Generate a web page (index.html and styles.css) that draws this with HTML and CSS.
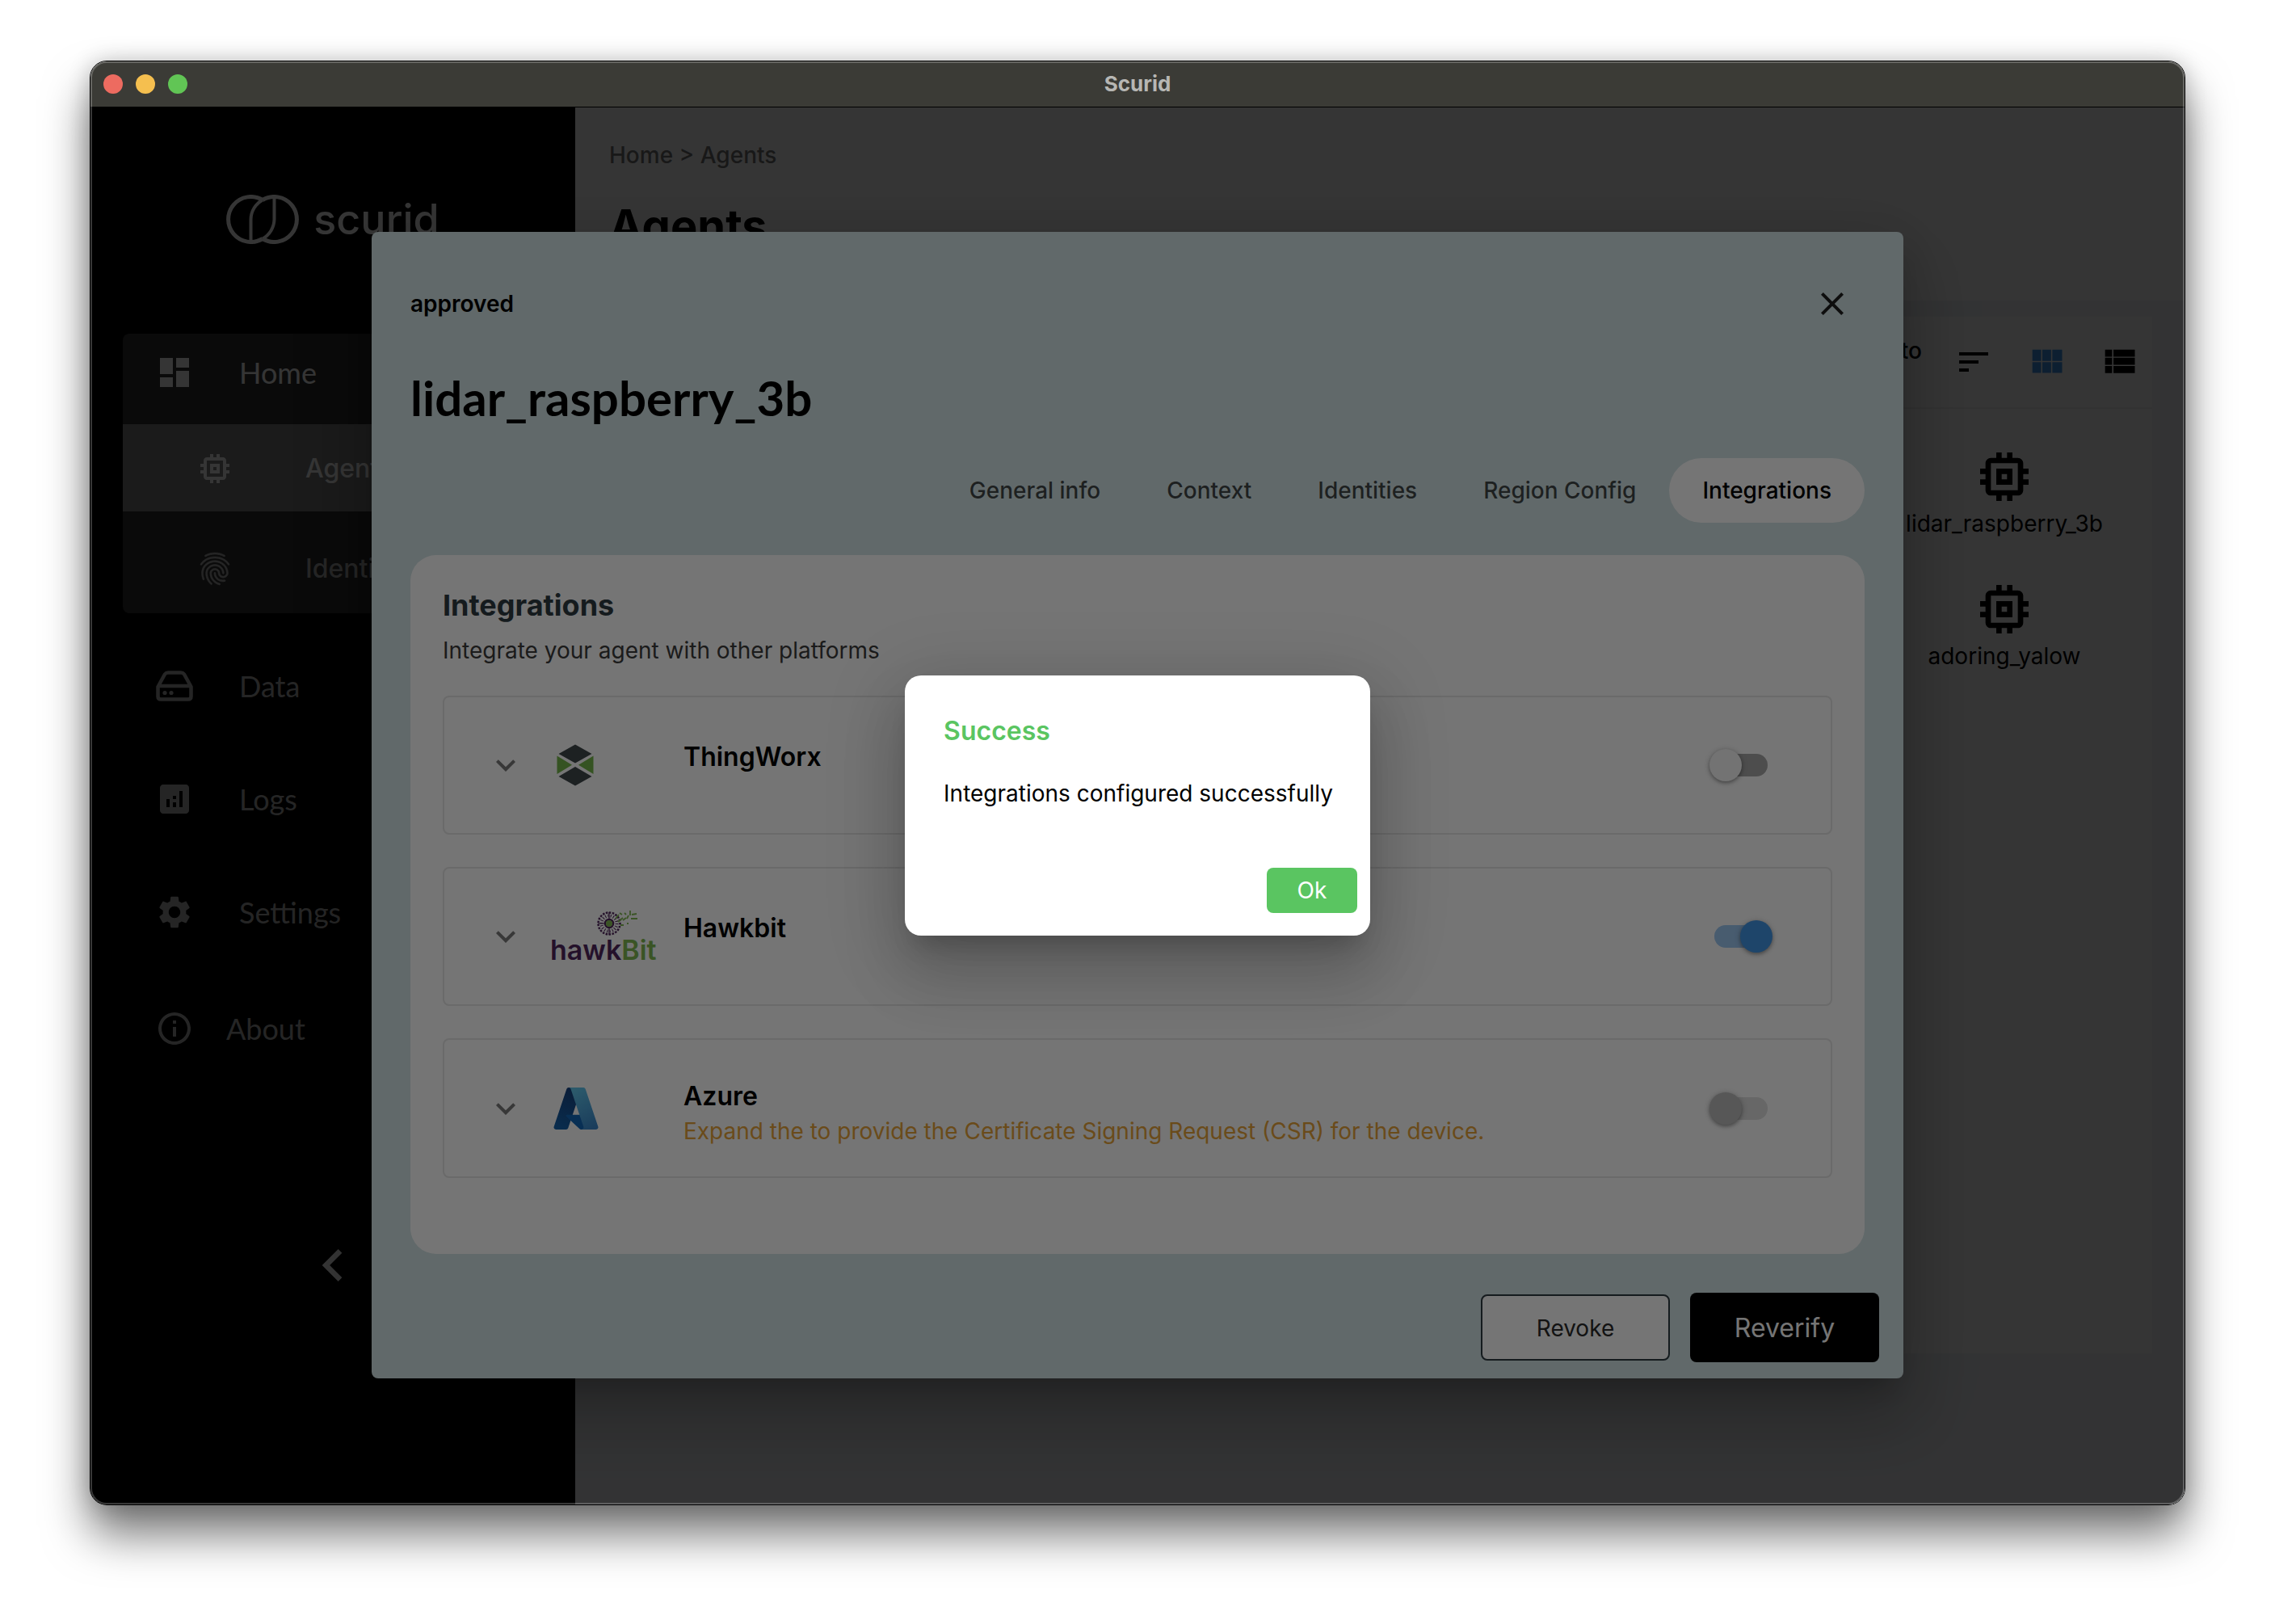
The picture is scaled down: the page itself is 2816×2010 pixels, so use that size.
FILE: index.html
```html
<!DOCTYPE html>
<html lang="en">
<head>
<meta charset="utf-8">
<title>Scurid</title>
<link rel="stylesheet" href="styles.css">
</head>
<body>
<svg class="defs" width="0" height="0" aria-hidden="true">
  <symbol id="i-memory" viewBox="0 0 24 24"><path d="M15 9H9v6h6V9zm-2 4h-2v-2h2v2zm8-2V9h-2V7c0-1.1-.9-2-2-2h-2V3h-2v2h-2V3H9v2H7c-1.1 0-2 .9-2 2v2H3v2h2v2H3v2h2v2c0 1.1.9 2 2 2h2v2h2v-2h2v2h2v-2h2c1.1 0 2-.9 2-2v-2h2v-2h-2v-2h2zm-4 6H7V7h10v10z"/></symbol>
  <symbol id="i-expand" viewBox="0 0 24 24"><path d="M16.59 8.59L12 13.17 7.41 8.59 6 10l6 6 6-6z"/></symbol>
</svg>

<div class="window">
  <header class="titlebar">
    <div class="lights"><i class="light light-close"></i><i class="light light-min"></i><i class="light light-max"></i></div>
    <span class="titlebar-name">Scurid</span>
  </header>

  <div class="app">
    <aside class="sidebar">
      <div class="logo">
        <svg width="90" height="61" viewBox="0 0 90 61">
          <g fill="none" stroke="currentColor" stroke-width="5">
            <path d="M45 6.5A28 28 0 1 0 45 54.5"/>
            <path d="M45 54.5A28 28 0 1 0 45 6.500"/>
            <path stroke-width="4" d="M59.500 3V30.500A28 28 0 0 1 45 54.500"/>
            <path stroke-width="4" d="M30.500 58V30.500A28 28 0 0 1 45 6.500"/>
          </g>
        </svg>
        <span>scurid</span>
      </div>
      <nav>
        <div class="nav-group">
          <a href="#" class="nav-row nav-home">
            <svg width="48" height="48" viewBox="0 0 24 24"><path d="M3 13h8V3H3v10zm0 8h8v-6H3v6zm10 0h8V11h-8v10zm0-18v6h8V3h-8z"/></svg>
            Home
          </a>
          <a href="#" class="nav-sub nav-active">
            <svg width="48" height="48"><use href="#i-memory"/></svg>
            Agents
          </a>
          <a href="#" class="nav-sub nav-identities">
            <svg width="48" height="48" viewBox="0 0 24 24"><path stroke="currentColor" stroke-width=".3" d="M17.81 4.47c-.08 0-.16-.02-.23-.06C15.66 3.42 14 3 12.01 3c-1.98 0-3.86.47-5.57 1.41-.24.13-.54.04-.68-.2-.13-.24-.04-.55.2-.68C7.82 2.52 9.86 2 12.01 2c2.13 0 3.99.47 6.03 1.52.25.13.34.43.21.67-.09.18-.26.28-.44.28zM3.5 9.72c-.1 0-.2-.03-.29-.09-.23-.16-.28-.47-.12-.7.99-1.4 2.25-2.5 3.75-3.27C9.98 4.04 14 4.03 17.15 5.65c1.5.77 2.76 1.86 3.75 3.25.16.22.11.54-.12.7-.23.16-.54.11-.7-.12-.9-1.26-2.04-2.25-3.39-2.94-2.87-1.47-6.54-1.47-9.4.01-1.36.7-2.5 1.7-3.4 2.96-.08.14-.23.21-.39.21zm6.25 12.07c-.13 0-.26-.05-.35-.15-.87-.87-1.34-1.43-2.01-2.64-.69-1.23-1.05-2.73-1.05-4.34 0-2.97 2.54-5.39 5.66-5.39s5.66 2.42 5.66 5.39c0 .28-.22.5-.5.5s-.5-.22-.5-.5c0-2.42-2.09-4.39-4.66-4.39-2.57 0-4.66 1.97-4.66 4.39 0 1.44.32 2.77.93 3.85.64 1.15 1.08 1.64 1.85 2.42.19.2.19.51 0 .71-.11.1-.24.15-.37.15zm7.17-1.85c-1.19 0-2.24-.3-3.1-.89-1.49-1.01-2.38-2.65-2.38-4.39 0-.28.22-.5.5-.5s.5.22.5.5c0 1.41.72 2.74 1.94 3.56.71.48 1.54.71 2.54.71.24 0 .64-.03 1.04-.1.27-.05.53.13.58.41.05.27-.13.53-.41.58-.57.11-1.07.12-1.21.12zM14.91 22c-.04 0-.09-.01-.13-.02-1.59-.44-2.63-1.03-3.72-2.1-1.4-1.39-2.17-3.24-2.17-5.22 0-1.62 1.38-2.94 3.08-2.94 1.7 0 3.08 1.32 3.08 2.94 0 1.07.93 1.94 2.08 1.94s2.08-.87 2.08-1.94c0-3.77-3.25-6.83-7.25-6.83-2.84 0-5.44 1.58-6.61 4.03-.39.81-.59 1.76-.59 2.8 0 .78.07 2.01.67 3.61.1.26-.03.55-.29.64-.26.1-.55-.04-.64-.29-.49-1.31-.73-2.61-.73-3.96 0-1.2.23-2.29.68-3.24 1.33-2.79 4.28-4.6 7.51-4.6 4.55 0 8.25 3.51 8.25 7.83 0 1.62-1.38 2.94-3.08 2.94s-3.08-1.32-3.08-2.94c0-1.07-.93-1.94-2.08-1.94s-2.08.87-2.08 1.94c0 1.71.66 3.31 1.87 4.51.95.94 1.86 1.46 3.27 1.85.27.07.42.35.35.61-.05.23-.26.38-.47.38z"/></svg>
            Identities
          </a>
        </div>
        <div class="nav-list">
          <a href="#" class="nav-row">
            <svg width="48" height="48" viewBox="0 0 48 48"><path fill="none" stroke="currentColor" stroke-width="4.500" stroke-linejoin="round" d="M3.500 25L12 9.500Q13.500 7.500 16 7.500H32Q34.500 7.500 36 9.500L44.500 25V37Q44.500 40.500 41 40.500H7Q3.500 40.500 3.500 37ZM3.500 24H44.500"/><circle cx="12" cy="32.500" r="2.600"/><circle cx="20" cy="32.500" r="2.600"/></svg>
            Data
          </a>
          <a href="#" class="nav-row">
            <svg width="48" height="48" viewBox="0 0 24 24"><path d="M19 3H5c-1.100 0-2 .9-2 2v14c0 1.100.9 2 2 2h14c1.100 0 2-.9 2-2V5c0-1.100-.9-2-2-2zM9 17H7v-5h2v5zm4 0h-2v-3h2v3zm0-5h-2v-2h2v2zm4 5h-2V7h2v10z"/></svg>
            Logs
          </a>
          <a href="#" class="nav-row">
            <svg width="48" height="48" viewBox="0 0 24 24"><path d="M19.140 12.940c.04-.3.060-.61.060-.94 0-.32-.02-.64-.07-.94l2.030-1.580c.18-.14.23-.41.120-.61l-1.920-3.320c-.12-.22-.37-.29-.59-.22l-2.390.96c-.5-.38-1.030-.7-1.620-.94l-.36-2.540c-.04-.24-.24-.41-.48-.41h-3.840c-.24 0-.43.17-.47.410l-.36 2.540c-.59.24-1.130.57-1.620.94l-2.390-.96c-.22-.08-.47 0-.59.220L2.740 8.870c-.12.210-.08.470.12.610l2.030 1.580c-.05.3-.09.630-.09.940s.02.640.07.940l-2.030 1.580c-.18.140-.23.410-.12.610l1.920 3.320c.12.220.37.290.59.220l2.390-.96c.5.380 1.030.7 1.620.94l.36 2.540c.05.240.24.410.48.410h3.840c.24 0 .44-.17.470-.41l.36-2.540c.59-.24 1.130-.56 1.620-.94l2.390.96c.22.080.47 0 .59-.22l1.920-3.320c.12-.22.070-.47-.12-.61l-2.010-1.580zM12 15.600c-1.980 0-3.600-1.620-3.600-3.600s1.620-3.600 3.600-3.600 3.600 1.620 3.600 3.600-1.620 3.600-3.600 3.600z"/></svg>
            Settings
          </a>
          <a href="#" class="nav-row nav-about">
            <svg width="48" height="48" viewBox="0 0 24 24"><path d="M11 7h2v2h-2zm0 4h2v6h-2zm1-9C6.480 2 2 6.480 2 12s4.480 10 10 10 10-4.480 10-10S17.520 2 12 2zm0 18c-4.410 0-8-3.590-8-8s3.590-8 8-8 8 3.590 8 8-3.590 8-8 8z"/></svg>
            About
          </a>
        </div>
      </nav>
      <button class="icon-button collapse" aria-label="Collapse menu">
        <svg width="80" height="80" viewBox="0 0 24 24"><path d="M15.410 16.590L10.830 12l4.580-4.590L14 6l-6 6 6 6z"/></svg>
      </button>
    </aside>

    <main class="main">
      <div class="page-head">
        <div class="breadcrumb">Home &gt; Agents</div>
        <h1>Agents</h1>
      </div>
      <div class="page-body">
        <section class="list-panel">
          <div class="toolbar">
            <span class="toolbar-note">to</span>
            <button class="icon-button tool" aria-label="Sort"><svg width="48" height="48" viewBox="0 0 24 24"><path d="M3 18h6v-2H3v2zM3 6v2h18V6H3zm0 7h12v-2H3v2z"/></svg></button>
            <button class="icon-button tool tool-on" aria-label="Grid view"><svg width="52" height="52" viewBox="0 0 24 24"><path d="M4 11.400h5V5H4v6.400zm0 6.800h5v-6.100H4v6.100zm5.700 0h5v-6.100h-5v6.100zm5.700 0H21v-6.100h-5.600v6.100zM9.700 11.400h5V5h-5v6.400zM15.400 5v6.400H21V5h-5.600z"/></svg></button>
            <button class="icon-button tool" aria-label="List view"><svg width="52" height="52" viewBox="0 0 24 24"><path d="M4 13.600h4V9.600H4v4zm0 4.700h4v-4H4v4zM4 9h4V5H4v4zm4.800 4.600H21V9.600H8.800v4zm0 4.700H21v-4H8.800v4zM8.800 5v4H21V5H8.800z"/></svg></button>
          </div>
          <div class="agents">
            <a href="#" class="agent"><svg width="80" height="80"><use href="#i-memory"/></svg>lidar_raspberry_3b</a>
            <a href="#" class="agent"><svg width="80" height="80"><use href="#i-memory"/></svg>adoring_yalow</a>
          </div>
        </section>
      </div>
    </main>

    <div class="scrim scrim-details">
      <section class="details" role="dialog" aria-labelledby="agent-name">
        <div class="details-top">
          <span class="status">approved</span>
          <button class="icon-button close" aria-label="Close"><svg width="48" height="48" viewBox="0 0 24 24"><path d="M19 6.410L17.590 5 12 10.590 6.410 5 5 6.410 10.590 12 5 17.590 6.410 19 12 13.410 17.590 19 19 17.590 13.410 12z"/></svg></button>
        </div>
        <h2 id="agent-name">lidar_raspberry_3b</h2>
        <div class="tabs" role="tablist">
          <button role="tab" class="tab">General info</button>
          <button role="tab" class="tab">Context</button>
          <button role="tab" class="tab">Identities</button>
          <button role="tab" class="tab">Region Config</button>
          <button role="tab" class="tab tab-on" aria-selected="true">Integrations</button>
        </div>
        <div class="panel">
          <h3>Integrations</h3>
          <p class="panel-lead">Integrate your agent with other platforms</p>
          <div class="cards">
            <div class="card">
              <button class="icon-button expand" aria-label="Expand ThingWorx"><svg width="48" height="48"><use href="#i-expand"/></svg></button>
              <div class="brand">
                <svg class="brand-thingworx" width="46" height="52" viewBox="0 0 46 52">
                  <path fill="#3f484b" d="M23 .5L43.500 12 23 23.500 2.500 12zM23 28L43.500 40 23 51.500 2.500 40z"/>
                  <path fill="#75b64a" d="M.5 14.500L19 25.800.5 37zM45.500 14.500L27 25.800 45.500 37z"/>
                </svg>
              </div>
              <label class="card-text" for="sw-thingworx"><span class="card-name">ThingWorx</span></label>
              <input type="checkbox" class="switch" id="sw-thingworx">
            </div>
            <div class="card">
              <button class="icon-button expand" aria-label="Expand Hawkbit"><svg width="48" height="48"><use href="#i-expand"/></svg></button>
              <div class="brand">
                <svg width="136" height="72" viewBox="0 -3 136 72">
                  <g fill="none" stroke="#50275d">
                    <circle cx="71" cy="17" r="13.500" stroke-width="2.500" stroke-dasharray="2.500 1.500" stroke-dashoffset="1"/>
                    <circle cx="71" cy="17" r="9.500" stroke-width="4" stroke-dasharray="1 2.300"/>
                    <circle cx="71" cy="17" r="5" stroke-width="2.500"/>
                    <path stroke-width="1.200" d="M71 3v9M71 22v9M57 17h9"/>
                  </g>
                  <circle cx="71" cy="17" r="4" fill="#7fb852"/>
                  <path fill="none" stroke="#7fb852" stroke-width="1.800" d="M79 11l4-5M82 15l6-5M84 4l3 2M90 4l2 2M97 1v6M88 13l4-3M93 11l2-4M99 6l6-1M98 11h8M85 19h4M93 17h2"/>
                  <text y="62" x="-2" class="hawkbit-word" fill="#50275d">hawk<tspan fill="#7fb852">Bit</tspan></text>
                </svg>
              </div>
              <label class="card-text" for="sw-hawkbit"><span class="card-name">Hawkbit</span></label>
              <input type="checkbox" class="switch" id="sw-hawkbit" checked>
            </div>
            <div class="card">
              <button class="icon-button expand" aria-label="Expand Azure"><svg width="48" height="48"><use href="#i-expand"/></svg></button>
              <div class="brand">
                <svg width="60" height="60" viewBox="0 0 96 96">
                  <linearGradient id="az-a" x1=".6" y1="0" x2=".3" y2="1"><stop offset="0" stop-color="#16407a"/><stop offset="1" stop-color="#1560a8"/></linearGradient>
                  <linearGradient id="az-b" x1=".3" y1="0" x2=".7" y2="1"><stop offset="0" stop-color="#60c4ea"/><stop offset="1" stop-color="#3a86c8"/></linearGradient>
                  <path fill="url(#az-a)" d="M33.340 6.540h26.040L32.350 86.600a4.150 4.150 0 0 1-3.930 2.830H8.150a4.140 4.140 0 0 1-3.930-5.470L29.400 9.380a4.150 4.150 0 0 1 3.940-2.830z"/>
                  <path fill="#1267b8" d="M71.170 60.260H29.880a1.910 1.910 0 0 0-1.300 3.310l26.530 24.760a4.170 4.170 0 0 0 2.850 1.130h23.380z"/>
                  <path fill="url(#az-b)" d="M66.600 9.360a4.140 4.140 0 0 0-3.930-2.820H33.650a4.150 4.150 0 0 1 3.930 2.820l25.180 74.620a4.150 4.150 0 0 1-3.930 5.480h29.020a4.150 4.150 0 0 0 3.930-5.480z"/>
                </svg>
              </div>
              <label class="card-text" for="sw-azure"><span class="card-name">Azure</span><span class="card-note">Expand the to provide the Certificate Signing Request (CSR) for the device.</span></label>
              <input type="checkbox" class="switch" id="sw-azure" disabled>
            </div>
          </div>
        </div>
        <div class="details-actions">
          <button class="btn btn-revoke">Revoke</button>
          <button class="btn btn-reverify">Reverify</button>
        </div>
      </section>
    </div>

    <div class="scrim">
      <section class="alert" role="alertdialog" aria-labelledby="alert-title">
        <h2 class="alert-title" id="alert-title">Success</h2>
        <p class="alert-text">Integrations configured successfully</p>
        <button class="btn-ok">Ok</button>
      </section>
    </div>
  </div>
</div>
</body>
</html>
```
FILE: styles.css
```css
*, *::before, *::after { box-sizing: border-box; }

body {
  margin: 0;
  min-height: 100vh;
  padding: 75px 111px 147px;
  display: flex;
  background: #fff;
  color: #000;
  font: 400 28px/36px Inter, "Liberation Sans", sans-serif;
}
h1, h2, h3, p { margin: 0; }
a { color: inherit; text-decoration: none; }
button { font: inherit; color: inherit; border: 0; padding: 0; background: none; cursor: pointer; }
svg { display: block; flex: none; fill: currentColor; }
.defs { position: absolute; }

/* Window frame */
.window {
  position: relative;
  flex: 1;
  display: flex;
  flex-direction: column;
  border: 1px solid #000;
  border-radius: 21px;
  overflow: hidden;
  box-shadow: 0 36px 56px rgba(0, 0, 0, .54), 0 0 28px rgba(0, 0, 0, .2);
}
.window::after {
  content: "";
  position: absolute;
  inset: 0;
  border: 2px solid rgba(255, 255, 255, .22);
  border-radius: 20px;
  pointer-events: none;
}
.titlebar {
  display: grid;
  grid-template-columns: 1fr auto 1fr;
  align-items: center;
  height: 57px;
  padding: 0 16px;
  background: #3b3b36;
  border-bottom: 1px solid #000;
}
.lights { display: flex; gap: 16px; }
.light { width: 24px; height: 24px; border-radius: 50%; }
.light-close { background: #ed6b60; }
.light-min { background: #f5bf4f; }
.light-max { background: #61c555; }
.titlebar-name { font-size: 26px; font-weight: 700; color: #b7b7b4; }

.app { position: relative; flex: 1; display: flex; }
.icon-button { display: flex; align-items: center; justify-content: center; }

/* Sidebar */
.sidebar {
  flex: none;
  width: 600px;
  display: flex;
  flex-direction: column;
  padding: 108px 40px 256px;
  background: #000;
  color: #fff;
}
.logo { display: flex; align-items: center; justify-content: center; gap: 18px; margin-bottom: 110px; font-size: 52px; font-weight: 500; line-height: 60px; }
.logo svg { margin-bottom: 1px; }
.nav-group { background: #303030; border-radius: 8px; padding-bottom: 2px; }
.nav-row { display: flex; align-items: center; gap: 56px; height: 100px; padding-left: 40px; font: 400 36px/44px Lato, "Liberation Sans", sans-serif; }
.nav-home { height: 112px; padding-bottom: 16px; }
.nav-sub { display: flex; align-items: center; gap: 88px; height: 108px; padding: 2px 0 0 90px; font-size: 32px; font-weight: 500; line-height: 40px; }
.nav-active { background: #808080; }
.nav-identities { margin-top: 16px; color: #b3b3b3; }
.nav-list { display: flex; flex-direction: column; gap: 40px; margin-top: 40px; color: #b3b3b3; }
.nav-about { gap: 40px; margin-top: 4px; }
.collapse { align-self: center; margin-top: auto; }

/* Agents page */
.main { flex: 1; min-width: 0; display: flex; flex-direction: column; background: #fff; }
.page-head { display: flex; flex-direction: column; gap: 36px; padding: 41px 42px 58px; }
.breadcrumb { color: #757575; font-weight: 500; }
.page-head h1 { font-size: 56px; line-height: 68px; font-weight: 700; }
.page-body { flex: 1; display: flex; padding: 20px 40px 187px; background: #f1f5f9; }
.list-panel { flex: 1; background: #fff; }
.toolbar { display: flex; align-items: center; justify-content: flex-end; gap: 38px; height: 114px; padding-right: 15px; border-bottom: 2px solid #f0f0f0; }
.toolbar-note { font-weight: 500; margin-bottom: 28px; }
.tool { width: 52px; height: 52px; }
.tool-on { color: #3f94e9; }
.agents { display: flex; flex-direction: column; align-items: center; gap: 48px; width: 366px; margin-left: auto; padding-top: 44px; }
.agent { display: flex; flex-direction: column; align-items: center; }

/* Agent details dialog */
.scrim { position: absolute; inset: 0; display: flex; align-items: center; justify-content: center; padding-bottom: 2px; background: rgba(0, 0, 0, .54); }
.scrim-details { padding: 0 348px 2px; }
.details, .alert {
  box-shadow: 0 22px 30px -14px rgba(0, 0, 0, .2), 0 48px 76px 6px rgba(0, 0, 0, .14), 0 18px 92px 16px rgba(0, 0, 0, .12);
}
.details { flex: 1; min-width: 0; padding: 65px 48px 20px; border-radius: 8px; background: #d3e4e6; }
.details-top { display: flex; align-items: center; justify-content: space-between; padding-right: 16px; }
.status { font-weight: 600; }
.close { color: #1f1f1f; }
.details h2 { margin: 56px 0 39px; font: 700 60px/72px Lato, "Liberation Sans", sans-serif; }
.tabs { display: flex; justify-content: flex-end; }
.tab { height: 80px; padding: 0 41px; border-radius: 40px; font-weight: 500; color: rgba(0, 0, 0, .7); }
.tab-on { background: #fff; color: #000; }
.panel { margin-top: 40px; padding: 40px 40px 94px; border-radius: 32px; background: #fff; }
.panel h3 { font-size: 36px; line-height: 44px; font-weight: 700; color: #2f3b42; }
.panel-lead { margin: 16px 0 38px; color: #3c3c3c; }
.cards { display: flex; flex-direction: column; gap: 40px; }
.card { display: flex; align-items: center; min-height: 172px; padding: 40px 72px 40px 52px; border: 2px solid #e6e6e6; border-radius: 8px; }
.expand { color: #7a7a7a; }
.brand { display: flex; align-items: center; width: 196px; padding-left: 33px; }
.brand-thingworx { margin-left: 6px; }
.hawkbit-word { font: 600 34px Inter, "Liberation Sans", sans-serif; }
.card-text { flex: 1; min-width: 0; display: flex; flex-direction: column; gap: 7px; min-height: 80px; padding-top: 10px; }
.card-name { font-size: 32px; line-height: 40px; font-weight: 600; }
.card-note { line-height: 32px; color: #e8a33a; }

.switch { appearance: none; position: relative; flex: none; width: 66px; height: 28px; margin: 0 6px; border-radius: 14px; background: rgba(0, 0, 0, .34); }
.switch::before { content: ""; position: absolute; top: -6px; left: -6px; width: 40px; height: 40px; border-radius: 50%; background: #fafafa; box-shadow: 0 2px 4px rgba(0, 0, 0, .3), 0 1px 8px rgba(0, 0, 0, .2); }
.switch:checked { background: #9dc8f2; }
.switch:checked::before { left: 32px; background: #4296e8; }
.switch:disabled { background: #e0e0e0; }
.switch:disabled::before { background: #bdbdbd; }

.details-actions { display: flex; justify-content: flex-end; align-items: center; gap: 25px; margin: 48px -18px 0 0; }
.btn { width: 234px; padding-top: 2px; border-radius: 8px; }
.btn-revoke { height: 82px; border: 2px solid #2f3b42; background: #fff; color: #2a2a2a; }
.btn-reverify { height: 86px; background: #000; color: #fff; font-size: 32px; }

/* Result dialog */
.alert { display: flex; flex-direction: column; min-width: 560px; padding: 49px 16px 28px; border-radius: 20px; background: #fff; }
.alert-title { padding: 0 32px; font-size: 32px; line-height: 40px; font-weight: 600; color: #5ac561; }
.alert-text { margin: 39px 0 74px; padding: 0 30px 0 32px; }
.btn-ok { align-self: flex-end; width: 112px; height: 56px; border-radius: 8px; background: #5ac561; color: #fff; }
```
